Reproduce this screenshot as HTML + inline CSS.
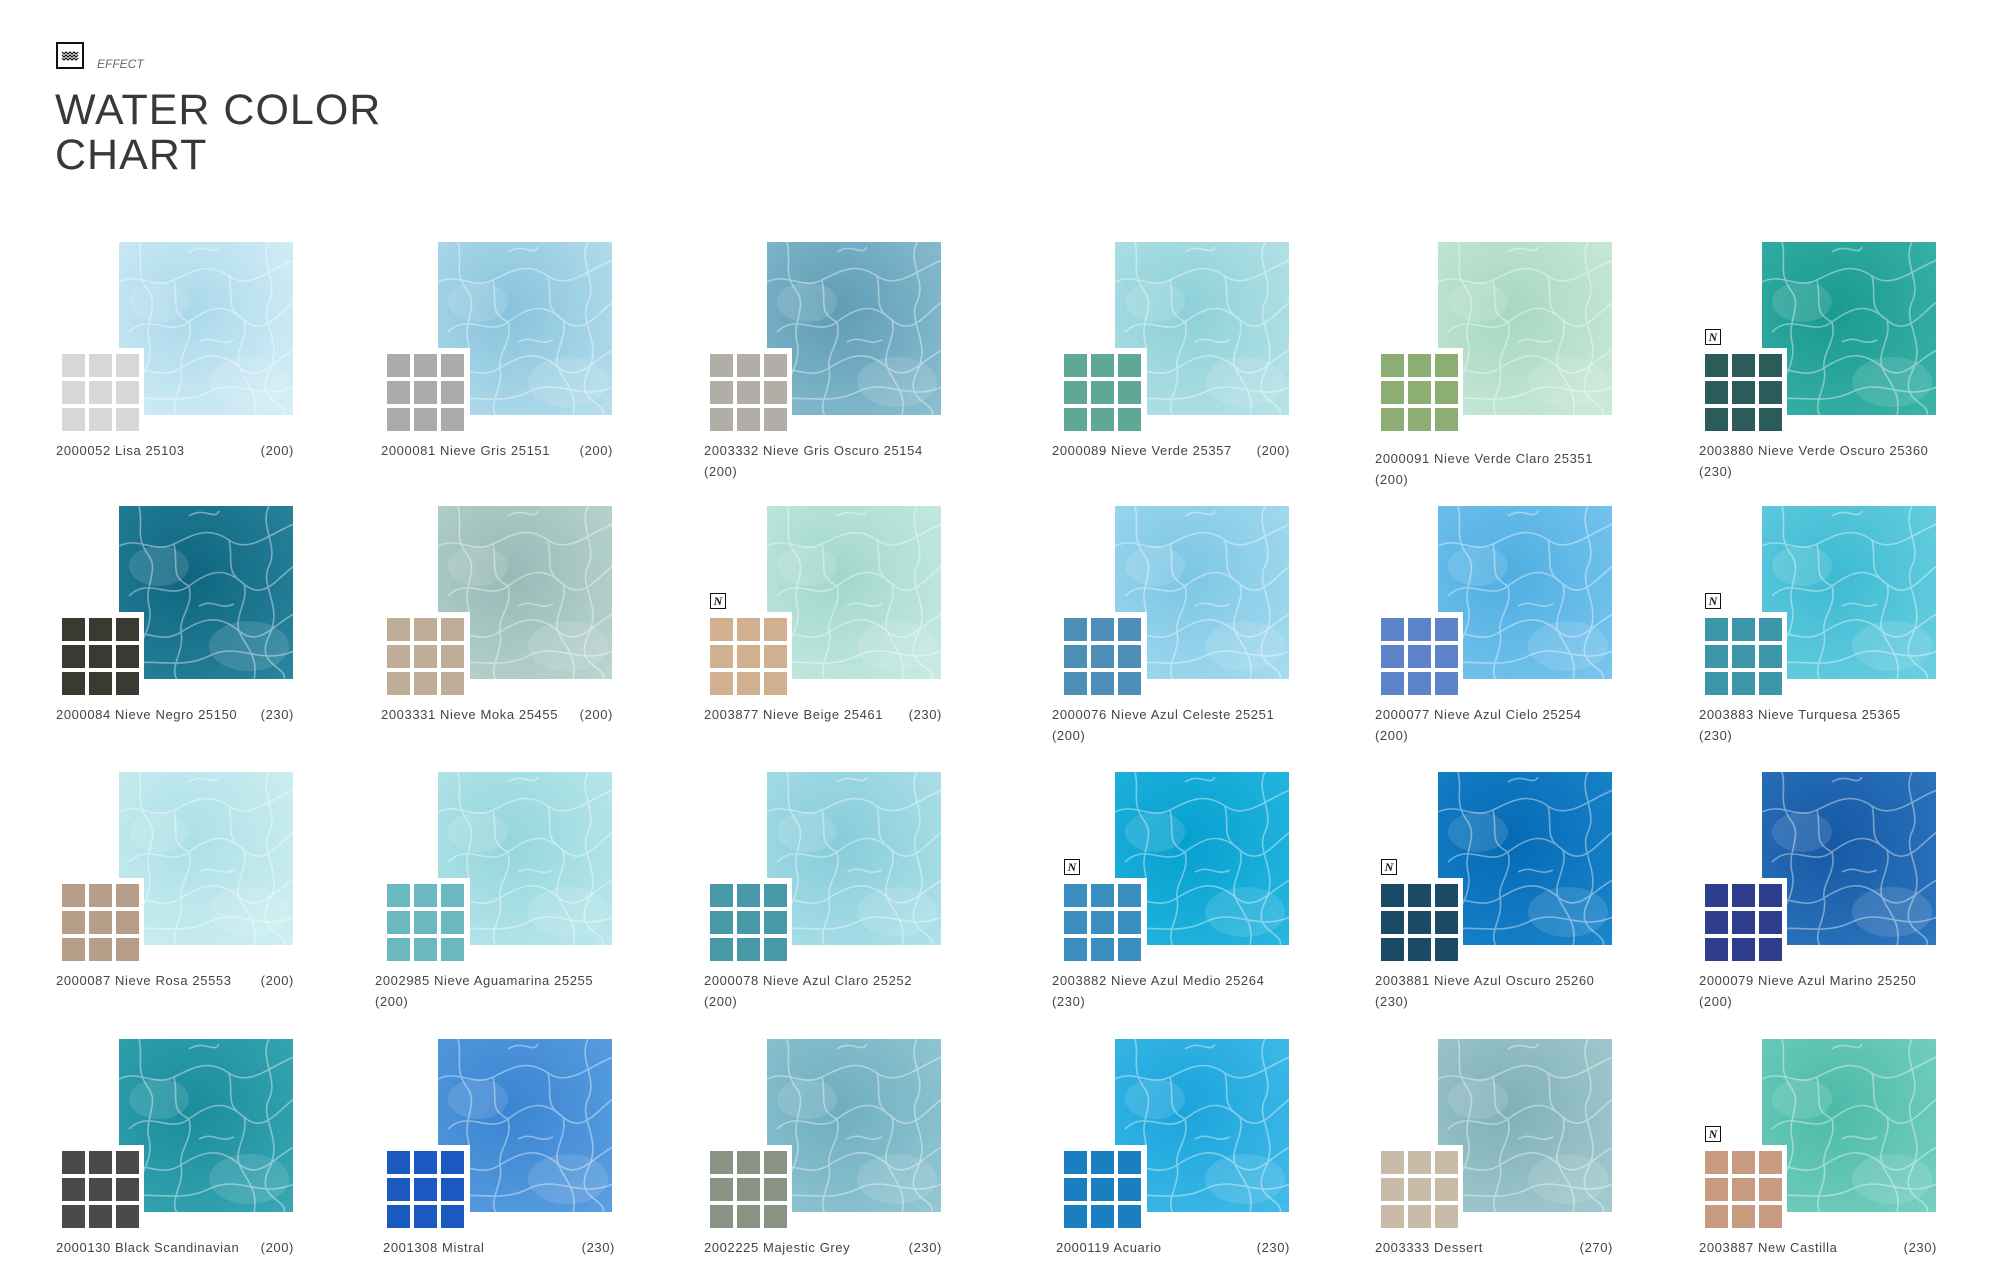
<!DOCTYPE html>
<html><head><meta charset="utf-8"><style>
body{margin:0;width:1992px;height:1276px;background:#fff;position:relative;overflow:hidden;font-family:"Liberation Sans",Arial,sans-serif;color:#444}
.ico{position:absolute;left:56px;top:42px;width:24px;height:23px;border:2px solid #111}
.eff{position:absolute;left:97px;top:57px;font-size:12px;font-style:italic;color:#666}
.t{position:absolute;left:55px;top:88px;font-size:43px;line-height:45px;color:#383838;letter-spacing:1px}
.it{position:absolute;width:240px;height:240px}
.w{position:absolute;left:63px;top:0;width:174px;height:173px;overflow:hidden}
.w svg{position:absolute;left:0;top:0}
.b{position:absolute;left:0;top:106px;width:88px;height:86px;background:#fff}
.g{position:absolute;left:6px;top:112px;width:77px;height:77px;
background-image:linear-gradient(90deg,transparent 23px,#fff 23px 27px,transparent 27px 50px,#fff 50px 54px,transparent 54px),linear-gradient(0deg,transparent 23px,#fff 23px 27px,transparent 27px 50px,#fff 50px 54px,transparent 54px)}
.n{position:absolute;left:6px;top:87px;width:14px;height:14px;border:1.5px solid #111;font:bold italic 12px/14px "Liberation Serif",serif;text-align:center;color:#111}
.l{position:absolute;left:0;top:198px;width:238px;font-size:13px;line-height:21px;letter-spacing:.6px;color:#444}
.l span{float:right}
.s .b{left:6px;width:89px}.s .g,.s .n{left:12px}
.c2 .l{left:6px;width:232px}
</style></head><body>
<svg width="0" height="0" style="position:absolute"><defs>
<symbol id="c" viewBox="0 0 175 174"><g fill="none" stroke="#fff" stroke-width="1.6" opacity=".4">
<path d="M0 40 C20 30 35 48 55 38 S90 20 110 34 S150 28 175 18"/><path d="M10 90 C30 70 50 95 70 80 S105 60 125 78 S160 70 175 60"/>
<path d="M0 130 C25 120 40 140 62 126 S100 108 120 125 S155 118 175 108"/><path d="M55 38 C60 60 50 70 70 80 C75 100 60 110 62 126 C66 145 50 160 58 174"/>
<path d="M110 34 C115 55 105 65 125 78 C130 95 115 110 120 125 C126 140 140 150 135 174"/><path d="M20 0 C25 20 15 30 30 50 C40 65 25 80 30 100 S20 140 10 160"/>
<path d="M150 0 C140 20 160 40 150 60 S165 100 150 130 S170 160 165 174"/><path d="M0 160 C30 150 60 165 90 150 S140 160 175 145"/>
<path d="M70 10 C85 0 95 15 100 5"/><path d="M80 100 C95 92 100 105 115 98"/></g>
<g fill="#fff" opacity=".12"><ellipse cx="40" cy="60" rx="30" ry="20"/><ellipse cx="130" cy="140" rx="40" ry="25"/></g></symbol></defs></svg>

<div class="ico"><svg width="24" height="23" viewBox="0 0 24 23"><g fill="none" stroke="#111" stroke-width="1.2"><path d="M4 8l2 2 2-2 2 2 2-2 2 2 2-2 2 2 2-2"/><path d="M4 11l2 2 2-2 2 2 2-2 2 2 2-2 2 2 2-2"/><path d="M4 14l2 2 2-2 2 2 2-2 2 2 2-2 2 2 2-2"/></g></svg></div>
<div class="eff">EFFECT</div>
<div class="t">WATER COLOR<br>CHART</div>

<!-- Row 1 -->
<div class="it" style="left:56px;top:242px"><div class="w" style="background:radial-gradient(circle at 40% 40%,#a9d8ea,#d8f0f8)"><svg width="175" height="174"><use href="#c"/></svg></div><div class="b"></div><div class="g" style="background-color:#d5d8d4"></div><div class="l">2000052 Lisa 25103<span>(200)</span></div></div>
<div class="it s c2" style="left:375px;top:242px"><div class="w" style="background:radial-gradient(circle at 40% 40%,#88c3dc,#b8e0ee)"><svg width="175" height="174"><use href="#c"/></svg></div><div class="b"></div><div class="g" style="background-color:#a9aca9"></div><div class="l">2000081 Nieve Gris 25151<span>(200)</span></div></div>
<div class="it" style="left:704px;top:242px"><div class="w" style="background:radial-gradient(circle at 40% 40%,#5e9cb5,#8cc0d2)"><svg width="175" height="174"><use href="#c"/></svg></div><div class="b"></div><div class="g" style="background-color:#b0aea6"></div><div class="l">2003332 Nieve Gris Oscuro 25154<br>(200)</div></div>
<div class="it s" style="left:1052px;top:242px"><div class="w" style="background:radial-gradient(circle at 40% 40%,#8dd0d8,#b8e4e8)"><svg width="175" height="174"><use href="#c"/></svg></div><div class="b"></div><div class="g" style="background-color:#5fa896"></div><div class="l">2000089 Nieve Verde 25357<span>(200)</span></div></div>
<div class="it" style="left:1375px;top:242px"><div class="w" style="background:radial-gradient(circle at 40% 40%,#a6d8c0,#cdeadc)"><svg width="175" height="174"><use href="#c"/></svg></div><div class="b"></div><div class="g" style="background-color:#8cae74"></div><div class="l" style="top:206px">2000091 Nieve Verde Claro 25351<br>(200)</div></div>
<div class="it" style="left:1699px;top:242px"><div class="w" style="background:radial-gradient(circle at 40% 40%,#1a9a90,#3cb4aa)"><svg width="175" height="174"><use href="#c"/></svg></div><div class="b"></div><div class="n">N</div><div class="g" style="background-color:#2b5c5a"></div><div class="l">2003880 Nieve Verde Oscuro 25360<br>(230)</div></div>

<!-- Row 2 -->
<div class="it" style="left:56px;top:506px"><div class="w" style="background:radial-gradient(circle at 40% 40%,#0f6580,#2a86a0)"><svg width="175" height="174"><use href="#c"/></svg></div><div class="b"></div><div class="g" style="background-color:#3a3a33"></div><div class="l">2000084 Nieve Negro 25150<span>(230)</span></div></div>
<div class="it s c2" style="left:375px;top:506px"><div class="w" style="background:radial-gradient(circle at 40% 40%,#96bab6,#bcd6d2)"><svg width="175" height="174"><use href="#c"/></svg></div><div class="b"></div><div class="g" style="background-color:#c0ad98"></div><div class="l">2003331 Nieve Moka 25455<span>(200)</span></div></div>
<div class="it" style="left:704px;top:506px"><div class="w" style="background:radial-gradient(circle at 40% 40%,#a2d6cc,#c8ece4)"><svg width="175" height="174"><use href="#c"/></svg></div><div class="b"></div><div class="n">N</div><div class="g" style="background-color:#d0b08e"></div><div class="l">2003877 Nieve Beige 25461<span>(230)</span></div></div>
<div class="it s" style="left:1052px;top:506px"><div class="w" style="background:radial-gradient(circle at 40% 40%,#7cc6e4,#a6dcf0)"><svg width="175" height="174"><use href="#c"/></svg></div><div class="b"></div><div class="g" style="background-color:#4e8fb8"></div><div class="l">2000076 Nieve Azul Celeste 25251<br>(200)</div></div>
<div class="it" style="left:1375px;top:506px"><div class="w" style="background:radial-gradient(circle at 40% 40%,#4eaee2,#7cc6ee)"><svg width="175" height="174"><use href="#c"/></svg></div><div class="b"></div><div class="g" style="background-color:#5d84c8"></div><div class="l">2000077 Nieve Azul Cielo 25254<br>(200)</div></div>
<div class="it" style="left:1699px;top:506px"><div class="w" style="background:radial-gradient(circle at 40% 40%,#3cbad2,#6cd0e2)"><svg width="175" height="174"><use href="#c"/></svg></div><div class="b"></div><div class="n">N</div><div class="g" style="background-color:#3d96a8"></div><div class="l">2003883 Nieve Turquesa 25365<br>(230)</div></div>

<!-- Row 3 -->
<div class="it" style="left:56px;top:772px"><div class="w" style="background:radial-gradient(circle at 40% 40%,#ace0e6,#d0f0f2)"><svg width="175" height="174"><use href="#c"/></svg></div><div class="b"></div><div class="g" style="background-color:#b69e88"></div><div class="l">2000087 Nieve Rosa 25553<span>(200)</span></div></div>
<div class="it s" style="left:375px;top:772px"><div class="w" style="background:radial-gradient(circle at 40% 40%,#94d6dc,#bce8ec)"><svg width="175" height="174"><use href="#c"/></svg></div><div class="b"></div><div class="g" style="background-color:#6ab8c0"></div><div class="l">2002985 Nieve Aguamarina 25255<br>(200)</div></div>
<div class="it" style="left:704px;top:772px"><div class="w" style="background:radial-gradient(circle at 40% 40%,#86ccda,#b0e2ea)"><svg width="175" height="174"><use href="#c"/></svg></div><div class="b"></div><div class="g" style="background-color:#4898a8"></div><div class="l">2000078 Nieve Azul Claro 25252<br>(200)</div></div>
<div class="it s" style="left:1052px;top:772px"><div class="w" style="background:radial-gradient(circle at 40% 40%,#06a0d0,#28b8e0)"><svg width="175" height="174"><use href="#c"/></svg></div><div class="b"></div><div class="n">N</div><div class="g" style="background-color:#3b8fc0"></div><div class="l">2003882 Nieve Azul Medio 25264<br>(230)</div></div>
<div class="it" style="left:1375px;top:772px"><div class="w" style="background:radial-gradient(circle at 40% 40%,#056ab4,#1a86cc)"><svg width="175" height="174"><use href="#c"/></svg></div><div class="b"></div><div class="n">N</div><div class="g" style="background-color:#1b4a66"></div><div class="l">2003881 Nieve Azul Oscuro 25260<br>(230)</div></div>
<div class="it" style="left:1699px;top:772px"><div class="w" style="background:radial-gradient(circle at 40% 40%,#1658a4,#2e78c0)"><svg width="175" height="174"><use href="#c"/></svg></div><div class="b"></div><div class="g" style="background-color:#2e3d8c"></div><div class="l">2000079 Nieve Azul Marino 25250<br>(200)</div></div>

<!-- Row 4 -->
<div class="it" style="left:56px;top:1039px"><div class="w" style="background:radial-gradient(circle at 40% 40%,#1a8c9c,#3aa8b4)"><svg width="175" height="174"><use href="#c"/></svg></div><div class="b"></div><div class="g" style="background-color:#4a4a48"></div><div class="l">2000130 Black Scandinavian<span>(200)</span></div></div>
<div class="it s" style="left:375px;top:1039px"><div class="w" style="background:radial-gradient(circle at 40% 40%,#3a84d2,#5ca0e0)"><svg width="175" height="174"><use href="#c"/></svg></div><div class="b"></div><div class="g" style="background-color:#1a5ac0"></div><div class="l" style="padding-left:8px;width:232px">2001308 Mistral<span>(230)</span></div></div>
<div class="it" style="left:704px;top:1039px"><div class="w" style="background:radial-gradient(circle at 40% 40%,#6eaec0,#94c8d4)"><svg width="175" height="174"><use href="#c"/></svg></div><div class="b"></div><div class="g" style="background-color:#8a9284"></div><div class="l">2002225 Majestic Grey<span>(230)</span></div></div>
<div class="it s" style="left:1052px;top:1039px"><div class="w" style="background:radial-gradient(circle at 40% 40%,#1aa4dc,#44bce8)"><svg width="175" height="174"><use href="#c"/></svg></div><div class="b"></div><div class="g" style="background-color:#1a7ec0"></div><div class="l" style="padding-left:4px;width:234px">2000119 Acuario<span>(230)</span></div></div>
<div class="it" style="left:1375px;top:1039px"><div class="w" style="background:radial-gradient(circle at 40% 40%,#80b0b8,#a4ccd0)"><svg width="175" height="174"><use href="#c"/></svg></div><div class="b"></div><div class="g" style="background-color:#c8bca8"></div><div class="l">2003333 Dessert<span>(270)</span></div></div>
<div class="it" style="left:1699px;top:1039px"><div class="w" style="background:radial-gradient(circle at 40% 40%,#4cbaa8,#78d0c2)"><svg width="175" height="174"><use href="#c"/></svg></div><div class="b"></div><div class="n">N</div><div class="g" style="background-color:#c89a80"></div><div class="l">2003887 New Castilla<span>(230)</span></div></div>
</body></html>
